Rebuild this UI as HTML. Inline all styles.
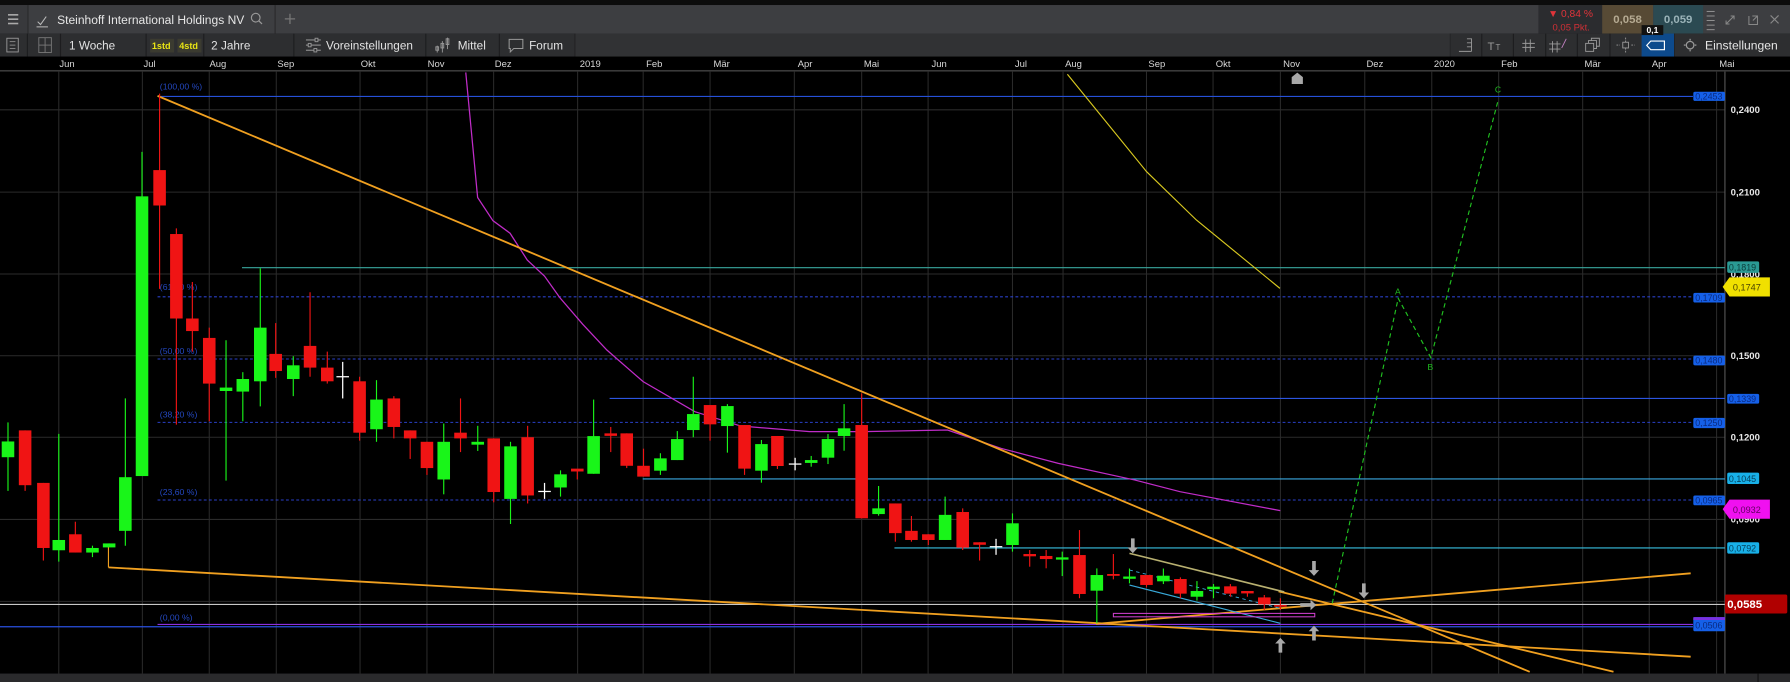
<!DOCTYPE html>
<html><head><meta charset="utf-8">
<style>
html,body{margin:0;padding:0;background:#000;width:1790px;height:682px;overflow:hidden}
svg{display:block}
text{font-family:"Liberation Sans",sans-serif}
</style></head>
<body>
<svg width="1790" height="682" viewBox="0 0 1568 597.4" preserveAspectRatio="none" xmlns="http://www.w3.org/2000/svg">
<rect x="0" y="0" width="1568" height="597.4" fill="#000"/>
<!-- top strip -->
<rect x="0" y="0" width="1568" height="4.4" fill="#0c0c0c"/>
<!-- tab bar -->
<rect x="0" y="4.4" width="1568" height="25" fill="#3d3e41"/>
<rect x="0" y="4.4" width="24" height="25" fill="#38393c"/>
<line x1="24.5" y1="4.4" x2="24.5" y2="29.4" stroke="#2a2a2c"/>
<line x1="241" y1="4.4" x2="241" y2="29.4" stroke="#2a2a2c"/>
<g stroke="#aaa" stroke-width="1.4"><line x1="7" y1="13" x2="16" y2="13"/><line x1="7" y1="16.8" x2="16" y2="16.8"/><line x1="7" y1="20.6" x2="16" y2="20.6"/></g>
<path d="M33 19 l2.5 2.5 l5 -7 M32 23.5 h10" stroke="#bbb" fill="none" stroke-width="0.9"/>
<text x="50" y="21" font-size="10.2" fill="#e6e6e6" textLength="164" lengthAdjust="spacingAndGlyphs">Steinhoff International Holdings NV</text>
<circle cx="224" cy="15.5" r="3.8" stroke="#999" fill="none" stroke-width="1"/><line x1="226.8" y1="18.3" x2="229.5" y2="21" stroke="#999" stroke-width="1.1"/>
<path d="M254 12 v9 M249.5 16.5 h9" stroke="#777" stroke-width="1.1"/>
<!-- quote area -->
<rect x="1347.6" y="4.4" width="56" height="25" fill="#2b2c2f"/>
<text x="1356" y="15" font-size="9" fill="#e0343a">▼ 0,84 %</text>
<text x="1360" y="26.5" font-size="8.3" fill="#d03036">0,05 Pkt.</text>
<rect x="1403.5" y="4.4" width="44.5" height="25" fill="#574a35"/>
<text x="1425.7" y="20" font-size="10" font-weight="bold" fill="#b5aa92" text-anchor="middle">0,058</text>
<rect x="1448.3" y="4.4" width="43.7" height="25" fill="#2b4a52"/>
<text x="1470" y="20" font-size="10" font-weight="bold" fill="#9ab3b8" text-anchor="middle">0,059</text>
<rect x="1492" y="4.4" width="76" height="25" fill="#3d3e41"/>
<g stroke="#999" stroke-width="0.8"><line x1="1495" y1="10" x2="1502" y2="10"/><line x1="1495" y1="14" x2="1502" y2="14"/><line x1="1495" y1="18" x2="1502" y2="18"/><line x1="1495" y1="22" x2="1502" y2="22"/><line x1="1495" y1="26" x2="1502" y2="26"/></g>
<path d="M1512 21 l7 -7 M1516 14 h3 v3 M1512 18 v3 h3" stroke="#888" fill="none" stroke-width="0.9"/>
<path d="M1532 14 v7.5 h7.5 v-4 M1535 14 h4.5 v4.5 M1535.5 18 l4 -4" stroke="#888" fill="none" stroke-width="0.9"/>
<path d="M1551 13.5 l7 7 M1558 13.5 l-7 7" stroke="#888" stroke-width="1"/>
<!-- toolbar -->
<rect x="0" y="29.4" width="1568" height="20.2" fill="#2d2e30"/>
<g stroke="#1d1d1f" stroke-width="1">
<line x1="24" y1="29.4" x2="24" y2="49.6"/><line x1="53" y1="29.4" x2="53" y2="49.6"/><line x1="128" y1="29.4" x2="128" y2="49.6"/><line x1="257.4" y1="29.4" x2="257.4" y2="49.6"/><line x1="373" y1="29.4" x2="373" y2="49.6"/><line x1="437.4" y1="29.4" x2="437.4" y2="49.6"/><line x1="503.8" y1="29.4" x2="503.8" y2="49.6"/>
<line x1="1270" y1="29.4" x2="1270" y2="49.6"/><line x1="1298" y1="29.4" x2="1298" y2="49.6"/><line x1="1325.7" y1="29.4" x2="1325.7" y2="49.6"/><line x1="1354" y1="29.4" x2="1354" y2="49.6"/><line x1="1381.7" y1="29.4" x2="1381.7" y2="49.6"/><line x1="1410.3" y1="29.4" x2="1410.3" y2="49.6"/><line x1="1466.4" y1="29.4" x2="1466.4" y2="49.6"/>
</g>
<rect x="504" y="29.4" width="766" height="20.2" fill="#313234"/>
<rect x="6" y="33.5" width="10" height="12" fill="none" stroke="#999" stroke-width="0.8"/><g stroke="#999" stroke-width="0.7"><line x1="8.5" y1="36.5" x2="13.5" y2="36.5"/><line x1="8.5" y1="39.5" x2="13.5" y2="39.5"/><line x1="8.5" y1="42.5" x2="13.5" y2="42.5"/></g>
<rect x="34" y="33" width="11" height="13" fill="none" stroke="#777" stroke-width="0.8"/><line x1="39.5" y1="33" x2="39.5" y2="46" stroke="#777" stroke-width="0.8"/><line x1="34" y1="39.5" x2="45" y2="39.5" stroke="#777" stroke-width="0.8"/>
<text x="60.5" y="43.3" font-size="10.3" fill="#e2e2e2">1 Woche</text>
<rect x="131.5" y="34" width="21" height="12" fill="#3b3b30"/><text x="133" y="43" font-size="8" font-weight="bold" fill="#e8e414">1std</text>
<rect x="155.5" y="34" width="21" height="12" fill="#3b3b30"/><text x="157" y="43" font-size="8" font-weight="bold" fill="#e8e414">4std</text>
<line x1="178.5" y1="29.4" x2="178.5" y2="49.6" stroke="#1d1d1f"/>
<text x="185" y="43.3" font-size="10.3" fill="#e2e2e2">2 Jahre</text>
<g stroke="#999" stroke-width="0.9"><line x1="268" y1="35" x2="281" y2="35"/><line x1="268" y1="39.5" x2="281" y2="39.5"/><line x1="268" y1="44" x2="281" y2="44"/></g>
<g fill="#2d2e30" stroke="#999" stroke-width="0.8"><rect x="276" y="33.5" width="2.5" height="3"/><rect x="270" y="38" width="2.5" height="3"/><rect x="275" y="42.5" width="2.5" height="3"/></g>
<text x="285.6" y="43.3" font-size="10.3" fill="#e2e2e2">Voreinstellungen</text>
<g stroke="#999" stroke-width="0.8" fill="none"><line x1="383" y1="40" x2="383" y2="46"/><rect x="381.8" y="41" width="2.4" height="3"/><line x1="387.5" y1="36" x2="387.5" y2="46"/><rect x="386.3" y="38" width="2.4" height="4"/><line x1="392" y1="33" x2="392" y2="43"/><rect x="390.8" y="34" width="2.4" height="5"/></g>
<text x="401" y="43.3" font-size="10.3" fill="#e2e2e2">Mittel</text>
<path d="M446 34.5 h12 v8 h-8 l-3 3 v-3 h-1 z" stroke="#999" fill="none" stroke-width="0.9"/>
<text x="463.5" y="43.3" font-size="10.3" fill="#e2e2e2">Forum</text>
<!-- right toolbar icons -->
<g stroke="#999" stroke-width="0.8" fill="none">
<path d="M1278 45 h11 M1285 34 h4 v11 M1285 37.5 h4 M1285 41 h4"/>
<path d="M1334 39.5 h11 M1334 43 h11 M1337 36 v11 M1341 36 v11" transform="translate(-0.5,-1.5)"/>
<path d="M1360 36 v10 M1364 36 v10 M1357 38.5 h10 M1357 43 h10"/>
<path d="M1372 34 l-4 8" stroke="#c080c0"/>
<rect x="1389" y="38" width="7" height="7"/><path d="M1391.5 38 v-2.5 h7 v7 h-2.5 M1394 35.5 v-2 h7 v7 h-2.5"/>
<rect x="1421.5" y="37" width="5" height="5"/><path d="M1424 33 v4 M1424 42 v4 M1416 39.5 h3 M1429 39.5 h3" stroke-dasharray="1.5 1"/>
</g>
<text x="1303" y="44" font-size="10" fill="#999">T</text><text x="1310" y="44" font-size="7" fill="#999">T</text>
<rect x="1438" y="29.4" width="28.4" height="20.2" fill="#0d4a8c"/>
<path d="M1446 36 h12 v7.5 h-12 l-3.5 -3.75 z" stroke="#fff" fill="none" stroke-width="1"/>
<rect x="1438" y="22" width="19" height="8.7" fill="#111"/>
<text x="1447.5" y="29" font-size="7.5" font-weight="bold" fill="#fff" text-anchor="middle">0,1</text>
<circle cx="1480.5" cy="39.5" r="3.3" stroke="#999" fill="none" stroke-width="1.1"/>
<g stroke="#999" stroke-width="1.1"><line x1="1480.5" y1="34" x2="1480.5" y2="35.5"/><line x1="1480.5" y1="43.5" x2="1480.5" y2="45"/><line x1="1475" y1="39.5" x2="1476.5" y2="39.5"/><line x1="1484.5" y1="39.5" x2="1486" y2="39.5"/></g>
<text x="1493.6" y="43.5" font-size="10.6" fill="#e6e6e6">Einstellungen</text>
<!-- date row -->
<rect x="0" y="49.6" width="1568" height="11.7" fill="#000"/>
<rect x="0" y="61.3" width="1568" height="1.4" fill="#3a3a3a"/>
<g font-size="8.3" fill="#d8d8d8">
<text x="52" y="58.8">Jun</text><text x="125.7" y="58.8">Jul</text><text x="183.5" y="58.8">Aug</text><text x="243" y="58.8">Sep</text><text x="316" y="58.8">Okt</text><text x="374.6" y="58.8">Nov</text><text x="433.4" y="58.8">Dez</text><text x="507.8" y="58.8">2019</text><text x="566" y="58.8">Feb</text><text x="625" y="58.8">Mär</text><text x="698.8" y="58.8">Apr</text><text x="756.7" y="58.8">Mai</text><text x="816" y="58.8">Jun</text><text x="889" y="58.8">Jul</text><text x="933" y="58.8">Aug</text><text x="1006" y="58.8">Sep</text><text x="1065" y="58.8">Okt</text><text x="1124" y="58.8">Nov</text><text x="1197" y="58.8">Dez</text><text x="1256" y="58.8">2020</text><text x="1315" y="58.8">Feb</text><text x="1388" y="58.8">Mär</text><text x="1447" y="58.8">Apr</text><text x="1506" y="58.8">Mai</text>
</g>
<!-- grid -->
<g stroke="#2b2b2b" stroke-width="0.9">
<line x1="51.5" y1="62.7" x2="51.5" y2="590"/><line x1="124.7" y1="62.7" x2="124.7" y2="590"/><line x1="183.3" y1="62.7" x2="183.3" y2="590"/><line x1="242" y1="62.7" x2="242" y2="590"/><line x1="315.4" y1="62.7" x2="315.4" y2="590"/><line x1="374" y1="62.7" x2="374" y2="590"/><line x1="432.4" y1="62.7" x2="432.4" y2="590"/><line x1="506" y1="62.7" x2="506" y2="590"/><line x1="563.4" y1="62.7" x2="563.4" y2="590"/><line x1="622" y1="62.7" x2="622" y2="590"/><line x1="695.8" y1="62.7" x2="695.8" y2="590"/><line x1="754.8" y1="62.7" x2="754.8" y2="590"/><line x1="813" y1="62.7" x2="813" y2="590"/><line x1="886.9" y1="62.7" x2="886.9" y2="590"/><line x1="931.2" y1="62.7" x2="931.2" y2="590"/><line x1="1004.3" y1="62.7" x2="1004.3" y2="590"/><line x1="1062.6" y1="62.7" x2="1062.6" y2="590"/><line x1="1121.6" y1="62.7" x2="1121.6" y2="590"/><line x1="1195.5" y1="62.7" x2="1195.5" y2="590"/><line x1="1254.2" y1="62.7" x2="1254.2" y2="590"/><line x1="1312.8" y1="62.7" x2="1312.8" y2="590"/><line x1="1386.4" y1="62.7" x2="1386.4" y2="590"/><line x1="1444.7" y1="62.7" x2="1444.7" y2="590"/><line x1="1503.7" y1="62.7" x2="1503.7" y2="590"/>
<line x1="0" y1="96.2" x2="1511" y2="96.2"/><line x1="0" y1="168.3" x2="1511" y2="168.3"/><line x1="0" y1="240" x2="1511" y2="240"/><line x1="0" y1="311.6" x2="1511" y2="311.6"/><line x1="0" y1="383" x2="1511" y2="383"/><line x1="0" y1="455" x2="1511" y2="455"/><line x1="0" y1="526.8" x2="1511" y2="526.8"/>
</g>
<line x1="1511" y1="62.7" x2="1511" y2="590" stroke="#555" stroke-width="1"/>
<!-- horizontal levels -->
<line x1="138" y1="84.5" x2="1483" y2="84.5" stroke="#2650d8" stroke-width="1"/>
<line x1="212" y1="234.5" x2="1511" y2="234.5" stroke="#3aa79e" stroke-width="1"/>
<g stroke="#2a40c8" stroke-width="0.9" stroke-dasharray="2.5 2">
<line x1="138" y1="260" x2="1483" y2="260"/><line x1="138" y1="314.5" x2="1483" y2="314.5"/><line x1="138" y1="370" x2="1483" y2="370"/><line x1="138" y1="438" x2="1483" y2="438"/>
</g>
<line x1="534" y1="349" x2="1511" y2="349" stroke="#2c55e0" stroke-width="1"/>
<line x1="563" y1="419.5" x2="1511" y2="419.5" stroke="#3aa8e0" stroke-width="1"/>
<line x1="783.5" y1="480" x2="1511" y2="480" stroke="#38c0e0" stroke-width="1"/>
<line x1="0" y1="529.5" x2="1511" y2="529.5" stroke="#c8c8c8" stroke-width="1"/>
<line x1="138" y1="547" x2="1483" y2="547" stroke="#8a30e0" stroke-width="1"/>
<line x1="0" y1="549" x2="1483" y2="549" stroke="#2a50e0" stroke-width="1"/>
<g font-size="7.6" fill="#2448c0">
<text x="140" y="78.5">(100,00 %)</text><text x="140" y="254">(61,80 %)</text><text x="140" y="310">(50,00 %)</text><text x="140" y="365.5">(38,20 %)</text><text x="140" y="433.5">(23,60 %)</text><text x="140" y="543.5">(0,00 %)</text>
</g>
<!-- MA magenta -->
<path d="M408 63.5 L418.4 173 L431.8 193.3 L446.8 204.3 L461.9 227.8 L477 241.9 L490.3 260.6 L510.4 284 L531.6 306.6 L563.4 334.3 L608.7 360.6 L648.9 373.2 L709.2 378.1 L756.2 378.1 L830 376.7 L876.8 392.7 L927.1 405.9 L994.2 420.5 L1033.7 430.7 L1121.5 447.3" stroke="#c02cc8" stroke-width="1.1" fill="none"/>
<!-- yellow -->
<path d="M935 65 L1004.4 150.4 L1048 192.7 L1121.2 252.6" stroke="#d8c820" stroke-width="1" fill="none"/>
<!-- orange lines -->
<g stroke="#f0a020" stroke-width="1.6" fill="none">
<line x1="138" y1="84" x2="1340" y2="588.5"/>
<line x1="95" y1="497" x2="1481" y2="575.2"/>
<line x1="95" y1="478" x2="95" y2="497" stroke-width="1"/>
<line x1="960" y1="546.5" x2="1481" y2="502.2"/>
<line x1="1120" y1="518" x2="1413.4" y2="588.4"/>
</g>
<line x1="989.4" y1="484.7" x2="1125" y2="518.5" stroke="#b8b070" stroke-width="1.4"/>
<line x1="989.4" y1="512.5" x2="1121.6" y2="546" stroke="#38a8d8" stroke-width="1"/>
<line x1="989.4" y1="499.3" x2="1121.6" y2="532.9" stroke="#38a8d8" stroke-width="0.8" stroke-dasharray="3 3"/>
<rect x="975.3" y="537.3" width="176.4" height="3" fill="none" stroke="#d040d0" stroke-width="0.9"/>
<!-- green dashed ABC -->
<path d="M1167 528.5 L1224.8 261.3 L1253.4 313.3 L1312.4 87.6" stroke="#20c020" stroke-width="1" stroke-dasharray="4 3" fill="none"/>
<g font-size="7.5" fill="#20c020"><text x="1222" y="258">A</text><text x="1250.5" y="324">B</text><text x="1309.5" y="81">C</text></g>
<!-- gray arrows -->
<g fill="#a8a8a8">
<path d="M990.7 471.6 h3.2 v8 h3 l-4.6 5 l-4.6 -5 h3 z"/>
<path d="M1149.4 491.4 h3.2 v8 h3 l-4.6 5 l-4.6 -5 h3 z"/>
<path d="M1193.1 511 h3.2 v8 h3 l-4.6 5 l-4.6 -5 h3 z"/>
<path d="M1120 571.7 h3.2 v-8 h3 l-4.6 -5 l-4.6 5 h3 z"/>
<path d="M1149.4 561 h3.2 v-8 h3 l-4.6 -5 l-4.6 5 h3 z"/>
<path d="M1139 528.3 h9 v-3 l5 4.6 l-5 4.6 v-3 h-9 z"/>
<path d="M1131.5 73.6 v-6 l4.9 -4 l4.9 4 v6 z"/>
</g>
<!-- candles -->
<g stroke-width="1">
<g fill="#19f519" stroke="#19f519">
<line x1="7" y1="370" x2="7" y2="430"/><rect x="1.5" y="386.7" width="11" height="13.8" stroke="none"/>
<line x1="51.5" y1="380" x2="51.5" y2="492"/><rect x="46" y="473" width="11" height="9" stroke="none"/>
<line x1="81" y1="478" x2="81" y2="488"/><rect x="75.5" y="480" width="11" height="4" stroke="none"/>
<line x1="95.6" y1="476" x2="95.6" y2="478"/><rect x="90.1" y="476" width="11" height="3.5" stroke="none"/>
<line x1="109.8" y1="349" x2="109.8" y2="478"/><rect x="104.3" y="418" width="11" height="47" stroke="none"/>
<line x1="124.4" y1="133" x2="124.4" y2="417"/><rect x="118.9" y="172" width="11" height="245" stroke="none"/>
<line x1="198" y1="298" x2="198" y2="421"/><rect x="192.5" y="339.5" width="11" height="3" stroke="none"/>
<line x1="212.7" y1="326" x2="212.7" y2="369"/><rect x="207.2" y="332" width="11" height="11" stroke="none"/>
<line x1="228" y1="235" x2="228" y2="356"/><rect x="222.5" y="287" width="11" height="47" stroke="none"/>
<line x1="256.9" y1="312" x2="256.9" y2="347"/><rect x="251.4" y="320" width="11" height="12" stroke="none"/>
<line x1="329.8" y1="333" x2="329.8" y2="387"/><rect x="324.3" y="350" width="11" height="26" stroke="none"/>
<line x1="388.7" y1="371" x2="388.7" y2="433"/><rect x="383.2" y="387" width="11" height="33" stroke="none"/>
<line x1="418.5" y1="373" x2="418.5" y2="395"/><rect x="413" y="387" width="11" height="2.5" stroke="none"/>
<line x1="447.2" y1="387" x2="447.2" y2="459"/><rect x="441.7" y="391" width="11" height="46" stroke="none"/>
<line x1="491" y1="412" x2="491" y2="435"/><rect x="485.5" y="415.5" width="11" height="11.5" stroke="none"/>
<line x1="520" y1="350" x2="520" y2="415"/><rect x="514.5" y="382" width="11" height="33" stroke="none"/>
<line x1="578.5" y1="397" x2="578.5" y2="416"/><rect x="573" y="401.5" width="11" height="10.8" stroke="none"/>
<line x1="593.3" y1="377.6" x2="593.3" y2="403"/><rect x="587.8" y="384.6" width="11" height="18.4" stroke="none"/>
<line x1="607.3" y1="330" x2="607.3" y2="383"/><rect x="601.8" y="362.7" width="11" height="14" stroke="none"/>
<line x1="637.2" y1="354" x2="637.2" y2="396.5"/><rect x="631.7" y="355.7" width="11" height="17.5" stroke="none"/>
<line x1="667" y1="385.4" x2="667" y2="422.8"/><rect x="661.5" y="389" width="11" height="23.3" stroke="none"/>
<line x1="710.6" y1="399.4" x2="710.6" y2="408.8"/><rect x="705.1" y="403" width="11" height="2.5" stroke="none"/>
<line x1="725.3" y1="380.2" x2="725.3" y2="406.5"/><rect x="719.8" y="384.6" width="11" height="16.3" stroke="none"/>
<line x1="739.4" y1="354" x2="739.4" y2="394.8"/><rect x="733.9" y="375.2" width="11" height="6.7" stroke="none"/>
<line x1="769.6" y1="425.7" x2="769.6" y2="451.7"/><rect x="764.1" y="445.3" width="11" height="5" stroke="none"/>
<line x1="827.9" y1="435" x2="827.9" y2="473"/><rect x="822.4" y="451" width="11" height="22" stroke="none"/>
<line x1="886.9" y1="449.7" x2="886.9" y2="483.2"/><rect x="881.4" y="458.4" width="11" height="19" stroke="none"/>
<line x1="930.5" y1="483.2" x2="930.5" y2="504.6"/><rect x="925" y="488.2" width="11" height="2" stroke="none"/>
<line x1="960.8" y1="497.9" x2="960.8" y2="546"/><rect x="955.3" y="503.7" width="11" height="13.7" stroke="none"/>
<line x1="989.4" y1="498" x2="989.4" y2="511"/><rect x="983.9" y="505" width="11" height="2" stroke="none"/>
<line x1="1019.1" y1="498" x2="1019.1" y2="511.6"/><rect x="1013.6" y="504.3" width="11" height="4.9" stroke="none"/>
<line x1="1048.5" y1="509" x2="1048.5" y2="526"/><rect x="1043" y="517.7" width="11" height="5" stroke="none"/>
<line x1="1063" y1="511.6" x2="1063" y2="524"/><rect x="1057.5" y="513.9" width="11" height="2.2" stroke="none"/>
</g>
<g fill="#f01414" stroke="#f01414">
<line x1="22" y1="377" x2="22" y2="430"/><rect x="16.5" y="377" width="11" height="48" stroke="none"/>
<line x1="38" y1="423" x2="38" y2="491"/><rect x="32.5" y="423" width="11" height="57" stroke="none"/>
<line x1="66" y1="457" x2="66" y2="484"/><rect x="60.5" y="468" width="11" height="16" stroke="none"/>
<line x1="139.8" y1="82" x2="139.8" y2="253"/><rect x="134.3" y="149" width="11" height="31" stroke="none"/>
<line x1="154.5" y1="200" x2="154.5" y2="372"/><rect x="149" y="205" width="11" height="74" stroke="none"/>
<line x1="168.5" y1="247" x2="168.5" y2="308"/><rect x="163" y="279" width="11" height="11" stroke="none"/>
<line x1="183.3" y1="287" x2="183.3" y2="369"/><rect x="177.8" y="296" width="11" height="40" stroke="none"/>
<line x1="241.5" y1="283" x2="241.5" y2="331"/><rect x="236" y="310" width="11" height="15" stroke="none"/>
<line x1="271.6" y1="256" x2="271.6" y2="330"/><rect x="266.1" y="303" width="11" height="19" stroke="none"/>
<line x1="286.7" y1="308" x2="286.7" y2="336"/><rect x="281.2" y="322" width="11" height="12" stroke="none"/>
<line x1="315" y1="330" x2="315" y2="386"/><rect x="309.5" y="334" width="11" height="45" stroke="none"/>
<line x1="345" y1="347" x2="345" y2="384"/><rect x="339.5" y="349" width="11" height="25" stroke="none"/>
<line x1="359.3" y1="377" x2="359.3" y2="402"/><rect x="353.8" y="377" width="11" height="7" stroke="none"/>
<line x1="374" y1="387" x2="374" y2="416"/><rect x="368.5" y="387" width="11" height="23" stroke="none"/>
<line x1="403.4" y1="349" x2="403.4" y2="396"/><rect x="397.9" y="379" width="11" height="5" stroke="none"/>
<line x1="432.5" y1="384" x2="432.5" y2="440"/><rect x="427" y="384" width="11" height="47" stroke="none"/>
<line x1="462.2" y1="373" x2="462.2" y2="441"/><rect x="456.7" y="383" width="11" height="51" stroke="none"/>
<line x1="505.7" y1="411" x2="505.7" y2="420"/><rect x="500.2" y="410.5" width="11" height="2.5" stroke="none"/>
<line x1="535" y1="374" x2="535" y2="396"/><rect x="529.5" y="379.6" width="11" height="2.2" stroke="none"/>
<line x1="549" y1="379.6" x2="549" y2="410"/><rect x="543.5" y="379.6" width="11" height="28.4" stroke="none"/>
<line x1="563.7" y1="393" x2="563.7" y2="417.5"/><rect x="558.2" y="408" width="11" height="9.5" stroke="none"/>
<line x1="622" y1="354.8" x2="622" y2="386"/><rect x="616.5" y="354.8" width="11" height="16.9" stroke="none"/>
<line x1="652.2" y1="372.3" x2="652.2" y2="416"/><rect x="646.7" y="372.3" width="11" height="38.2" stroke="none"/>
<line x1="681" y1="381.9" x2="681" y2="410.8"/><rect x="675.5" y="381.9" width="11" height="26.3" stroke="none"/>
<line x1="754.8" y1="344.6" x2="754.8" y2="454"/><rect x="749.3" y="372.3" width="11" height="81.7" stroke="none"/>
<line x1="784.3" y1="441" x2="784.3" y2="474.5"/><rect x="778.8" y="441" width="11" height="26" stroke="none"/>
<line x1="798.4" y1="452" x2="798.4" y2="474.5"/><rect x="792.9" y="465" width="11" height="8" stroke="none"/>
<line x1="813.2" y1="468" x2="813.2" y2="477.4"/><rect x="807.7" y="468" width="11" height="5" stroke="none"/>
<line x1="843.3" y1="445.3" x2="843.3" y2="481.8"/><rect x="837.8" y="448.5" width="11" height="31.2" stroke="none"/>
<line x1="858.1" y1="475" x2="858.1" y2="491"/><rect x="852.6" y="475" width="11" height="2.2" stroke="none"/>
<line x1="902" y1="481.8" x2="902" y2="496.4"/><rect x="896.5" y="485.3" width="11" height="2" stroke="none"/>
<line x1="916.4" y1="481.8" x2="916.4" y2="497.8"/><rect x="910.9" y="487" width="11" height="2.7" stroke="none"/>
<line x1="945.6" y1="464.3" x2="945.6" y2="524"/><rect x="940.1" y="486.2" width="11" height="34.1" stroke="none"/>
<line x1="975.3" y1="485.3" x2="975.3" y2="507.5"/><rect x="969.8" y="502.8" width="11" height="1.6" stroke="none"/>
<line x1="1004.3" y1="503.7" x2="1004.3" y2="514.5"/><rect x="998.8" y="503.7" width="11" height="8.7" stroke="none"/>
<line x1="1034" y1="505.7" x2="1034" y2="524"/><rect x="1028.5" y="507.2" width="11" height="12.8" stroke="none"/>
<line x1="1077.8" y1="511.6" x2="1077.8" y2="522.7"/><rect x="1072.3" y="513.6" width="11" height="6.4" stroke="none"/>
<line x1="1092.7" y1="517.7" x2="1092.7" y2="522.7"/><rect x="1087.2" y="517.7" width="11" height="2.1" stroke="none"/>
<line x1="1107.5" y1="521.2" x2="1107.5" y2="534.4"/><rect x="1102" y="523.3" width="11" height="6.1" stroke="none"/>
<line x1="1121.6" y1="524" x2="1121.6" y2="534.4"/><rect x="1116.1" y="530" width="11" height="1.4" stroke="none"/>
</g>
<g stroke="#ffffff" stroke-width="1.1">
<line x1="300.2" y1="317" x2="300.2" y2="349"/><line x1="294.7" y1="330" x2="305.7" y2="330"/>
<line x1="477" y1="423" x2="477" y2="437"/><line x1="471.5" y1="430.5" x2="482.5" y2="430.5"/>
<line x1="696.5" y1="401" x2="696.5" y2="412"/><line x1="691" y1="406.5" x2="702" y2="406.5"/>
<line x1="872.5" y1="472" x2="872.5" y2="486"/><line x1="867" y1="478.9" x2="878" y2="478.9"/>
</g>
</g>
<!-- right axis labels -->
<g font-size="8.4" font-weight="bold" fill="#e8e8e8">
<text x="1516" y="99">0,2400</text><text x="1516" y="171.3">0,2100</text><text x="1516" y="243">0,1800</text><text x="1516" y="314.3">0,1500</text><text x="1516" y="385.8">0,1200</text><text x="1516" y="457.5">0,0900</text>
</g>
<g font-size="7.8" fill="#0a2a80">
<rect x="1483.3" y="80.4" width="27.7" height="8" rx="1.5" fill="#1560e8"/><text x="1485" y="87.3">0,2453</text>
<rect x="1513" y="229" width="28" height="10" rx="1.5" fill="#2a9a94"/><text x="1514.5" y="237" fill="#0c3c3a">0,1819</text>
<rect x="1483.3" y="256.5" width="27.7" height="8.5" rx="1.5" fill="#1560e8"/><text x="1485" y="263.6">0,1709</text>
<rect x="1483.3" y="311.5" width="27.7" height="8.5" rx="1.5" fill="#1560e8"/><text x="1485" y="318.6">0,1480</text>
<rect x="1513" y="345" width="28" height="8.6" rx="1.5" fill="#1560e8"/><text x="1514.5" y="352.2">0,1339</text>
<rect x="1483.3" y="366" width="27.7" height="9" rx="1.5" fill="#1560e8"/><text x="1485" y="373.3">0,1250</text>
<rect x="1513" y="414" width="28" height="10" rx="1.5" fill="#18b0e8"/><text x="1514.5" y="422" fill="#04405a">0,1045</text>
<rect x="1483.3" y="434" width="27.7" height="8.6" rx="1.5" fill="#1560e8"/><text x="1485" y="441.2">0,0965</text>
<rect x="1513" y="475" width="28" height="10" rx="1.5" fill="#18b0e8"/><text x="1514.5" y="483" fill="#04405a">0,0792</text>
<rect x="1483.3" y="540.6" width="27.7" height="12.4" rx="1.5" fill="#1560e8"/><rect x="1483.3" y="540.6" width="27.7" height="2.5" fill="#7a30e0"/><text x="1485" y="550.5">0,0506</text>
</g>
<path d="M1509 251.3 L1515 243 H1550.4 V259.7 H1515 Z" fill="#f0e000"/>
<text x="1518" y="254.6" font-size="8" fill="#4a4400">0,1747</text>
<path d="M1509 446 L1515 437.7 H1550.4 V454.4 H1515 Z" fill="#f010f0"/>
<text x="1518" y="449.3" font-size="8" fill="#600060">0,0932</text>
<rect x="1511" y="520.8" width="54.6" height="16.6" rx="1.5" fill="#b00000"/>
<text x="1513" y="532.4" font-size="10" font-weight="bold" fill="#fff">0,0585</text>
<!-- bottom -->
<rect x="0" y="590" width="1568" height="7.4" fill="#2a2a2c"/>
<line x1="1540" y1="590" x2="1540" y2="597.4" stroke="#111"/>
</svg>
</body></html>
